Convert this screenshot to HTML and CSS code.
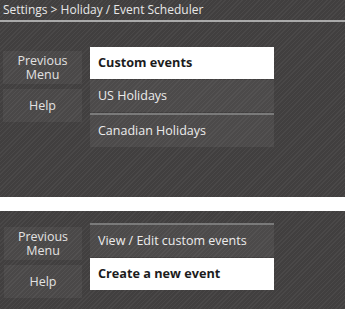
FILE: index.html
```html
<!DOCTYPE html>
<html lang="en">
<head>
  <meta charset="UTF-8">
  <title>Holiday / Event Scheduler</title>
  <link rel="stylesheet" href="styles.css">
</head>
<body>

  <!-- Pantalla 1: menu del programador -->
  <div class="screen screen-top">
    <div class="header">Settings &gt; Holiday / Event Scheduler</div>
    <div class="content">
      <div class="side">
        <div class="side-btn"><span>Previous</span><span>Menu</span></div>
        <div class="side-btn"><span>Help</span></div>
      </div>
      <div class="list">
        <div class="item selected">Custom events</div>
        <div class="item">US Holidays</div>
        <div class="item divided">Canadian Holidays</div>
      </div>
    </div>
  </div>

  <div class="gap"></div>

  <!-- Pantalla 2: eventos personalizados -->
  <div class="screen screen-bottom">
    <div class="content">
      <div class="side">
        <div class="side-btn"><span>Previous</span><span>Menu</span></div>
        <div class="side-btn"><span>Help</span></div>
      </div>
      <div class="list">
        <div class="item divided">View / Edit custom events</div>
        <div class="item selected">Create a new event</div>
      </div>
    </div>
  </div>

</body>
</html>
```

FILE: styles.css
```css
body {
  margin: 0;
  padding: 0;
  background-color: #fff;
  font-family: 'Open Sans', 'Noto Sans', sans-serif;
}

.screen {
  background-color: #444242;
  background-image: repeating-linear-gradient(
    135deg,
    rgba(255, 255, 255, 0.03) 0px,
    rgba(255, 255, 255, 0.03) 1px,
    rgba(0, 0, 0, 0.05) 1px,
    rgba(0, 0, 0, 0.05) 3px
  );
  color: #e6e6e6;
}

.screen-top {
  height: 197px;
}

.screen-bottom {
  height: 98px;
}

.header {
  height: 20px;
  line-height: 20px;
  padding-left: 3px;
  font-size: 12px;
  color: #e8e8e8;
  border-bottom: 2px solid #a9a9a9;
  white-space: nowrap;
  overflow: hidden;
}

.content {
  display: flex;
  align-items: flex-start;
  gap: 8px;
  padding: 25px 0 0 3px;
}

.screen-bottom .content {
  padding-top: 12px;
  padding-left: 4px;
}

.side {
  display: flex;
  flex-direction: column;
  gap: 5px;
  margin-top: 4px;
  width: 79px;
}

.screen-bottom .side {
  width: 78px;
}

.side-btn {
  height: 33px;
  display: flex;
  flex-direction: column;
  align-items: center;
  justify-content: center;
  text-align: center;
  font-size: 12.5px;
  background-color: rgba(255, 255, 255, 0.05);
  color: #e2e2e2;
}

.side-btn span {
  display: block;
  height: 14px;
  line-height: 14px;
}

.list {
  width: 184px;
}

.item {
  height: 32px;
  line-height: 31px;
  padding-left: 8px;
  font-size: 12.5px;
  color: #ececec;
  background-color: rgba(255, 255, 255, 0.06);
  box-sizing: border-box;
  white-space: nowrap;
}

.item + .item {
  margin-top: 1px;
}

.item.divided {
  border-top: 2px solid #7a7a7a;
  height: 34px;
  line-height: 32px;
}

.item.selected {
  background-color: #fff;
  color: #1c1c1c;
  font-weight: bold;
  font-size: 12.7px;
}

.gap {
  height: 14px;
  background-color: #fff;
}
```
